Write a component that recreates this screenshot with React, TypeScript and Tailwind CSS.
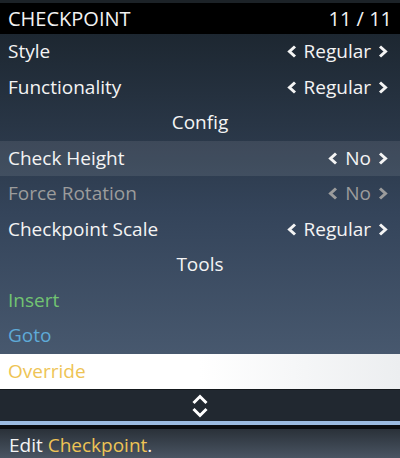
import React from 'react';

type Row =
  | { kind: 'option'; label: string; value: string; active?: boolean; disabled?: boolean }
  | { kind: 'header'; label: string }
  | { kind: 'action'; label: string; color: string; selected?: boolean };

const rows: Row[] = [
  { kind: 'option', label: 'Style', value: 'Regular' },
  { kind: 'option', label: 'Functionality', value: 'Regular' },
  { kind: 'header', label: 'Config' },
  { kind: 'option', label: 'Check Height', value: 'No', active: true },
  { kind: 'option', label: 'Force Rotation', value: 'No', disabled: true },
  { kind: 'option', label: 'Checkpoint Scale', value: 'Regular' },
  { kind: 'header', label: 'Tools' },
  { kind: 'action', label: 'Insert', color: 'text-[#72c472]' },
  { kind: 'action', label: 'Goto', color: 'text-[#5eaad8]' },
  { kind: 'action', label: 'Override', color: 'text-[#eec455]', selected: true },
];

function Chevron({ dir }: { dir: 'left' | 'right' }) {
  return (
    <svg width="10" height="13" viewBox="0 0 10 13">
      <path
        d={dir === 'left' ? 'M8 1.5 L2.5 6.5 L8 11.5' : 'M2 1.5 L7.5 6.5 L2 11.5'}
        fill="none"
        stroke="currentColor"
        strokeWidth="3"
      />
    </svg>
  );
}

function MenuRow({ row }: { row: Row }) {
  if (row.kind === 'header') {
    return (
      <div className="flex h-[35.5px] items-center justify-center text-[#f4f4f4]">
        {row.label}
      </div>
    );
  }
  if (row.kind === 'action') {
    return (
      <div
        className={
          'flex h-[35.5px] items-center px-[8px] ' +
          (row.selected ? 'bg-gradient-to-r from-white via-white to-[#eceef0] ' : '') +
          row.color
        }
      >
        {row.label}
      </div>
    );
  }
  const tone = row.disabled ? 'text-[#9c9c9c]' : 'text-[#f4f4f4]';
  return (
    <div
      className={
        'flex h-[35.5px] items-center justify-between pl-[8px] pr-[12px] ' +
        tone +
        (row.active ? ' bg-[#ffffff]/[0.09]' : '')
      }
    >
      <span>{row.label}</span>
      <span className="flex items-center gap-[7px]">
        <Chevron dir="left" />
        <span>{row.value}</span>
        <Chevron dir="right" />
      </span>
    </div>
  );
}

export default function App() {
  return (
    <div
      className="flex h-[458px] w-[400px] flex-col overflow-hidden bg-[#1c2227] text-[19px] leading-none"
      style={{ fontFamily: '"Open Sans", "Noto Sans", sans-serif' }}
    >
      <div className="mt-[3px] flex h-[31px] items-center justify-between bg-black px-[8px] text-[20px] text-[#f2f2f2]">
        <span>CHECKPOINT</span>
        <span>11 / 11</span>
      </div>
      <div className="flex flex-col bg-gradient-to-b from-[#1d2731] via-[#34445a] to-[#4c5d73]">
        {rows.map((r, i) => (
          <MenuRow key={i} row={r} />
        ))}
      </div>
      <div className="flex h-[32px] items-center justify-center border-t border-[#15191d] bg-[#212830] text-white">
        <svg width="16" height="28" viewBox="0 0 16 28">
          <path d="M1.5 11 L8 4.5 L14.5 11" fill="none" stroke="currentColor" strokeWidth="3" />
          <path d="M1.5 17 L8 23.5 L14.5 17" fill="none" stroke="currentColor" strokeWidth="3" />
        </svg>
      </div>
      <div className="h-[4px] bg-[#9cbbe0]" />
      <div className="h-[4px] bg-[#0b0d10]" />
      <div className="flex flex-1 items-center bg-gradient-to-b from-[#2a3139] to-[#4a5563] px-[9px] pt-[4px] text-[#f4f4f4]">
        <span>
          Edit <span className="text-[#eec455]">Checkpoint</span>.
        </span>
      </div>
    </div>
  );
}
